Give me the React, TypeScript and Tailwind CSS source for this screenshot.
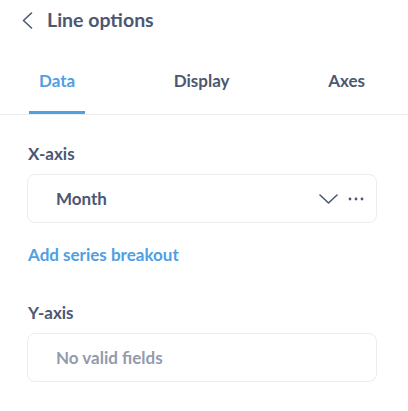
const font = { fontFamily: 'Lato, "Noto Sans", sans-serif' };

export default function App() {
    return (
        <div className="w-[408px] h-[411px] bg-white text-[#4c5773] overflow-hidden" style={font}>
            <div className="flex items-center h-[40px] pl-[22px] gap-[14px]">
                <svg width="11" height="17" viewBox="0 0 11 17" fill="none" stroke="currentColor" strokeWidth="1.6" strokeLinecap="round" strokeLinejoin="round">
                    <polyline points="9.5,1 1.5,8.5 9.5,16" />
                </svg>
                <span className="text-[19.5px] leading-[24px] font-bold">Line options</span>
            </div>

            <div className="flex justify-between pl-[29px] pr-[33px] pt-[31px] border-b border-[#eeecec]">
                {['Data', 'Display', 'Axes'].map((t, i) => (
                    <div
                        key={t}
                        className={`px-[10px] pb-[20px] text-[17px] leading-[20px] font-bold border-b-[3px] ${
                            i === 0 ? 'text-[#509ee3] border-[#509ee3]' : 'border-transparent'
                        }`}
                    >
                        {t}
                    </div>
                ))}
            </div>

            <div className="pl-[27px] pr-[31px] pt-[29px]">
                <div className="text-[17px] leading-[20px] font-bold pl-[1px] mb-[10px]">X-axis</div>
                <div className="h-[49px] border border-[#eeecec] rounded-[8px] flex items-center pl-[28px] pr-[12px]">
                    <span className="text-[17px] leading-[20px] font-bold flex-1">Month</span>
                    <svg width="19" height="10" viewBox="0 0 19 10" fill="none" stroke="currentColor" strokeWidth="1.6" strokeLinecap="round" strokeLinejoin="round">
                        <polyline points="1,1 9.5,9 18,1" />
                    </svg>
                    <svg width="16" height="4" viewBox="0 0 16 4" fill="currentColor" className="ml-[10px]">
                        <circle cx="2" cy="2" r="1.4" />
                        <circle cx="8" cy="2" r="1.4" />
                        <circle cx="14" cy="2" r="1.4" />
                    </svg>
                </div>
                <div className="text-[17px] leading-[20px] font-bold text-[#509ee3] pl-[1px] mt-[22px]">Add series breakout</div>

                <div className="text-[17px] leading-[20px] font-bold pl-[1px] mt-[38px] mb-[10px]">Y-axis</div>
                <div className="h-[49px] border border-[#eeecec] rounded-[8px] flex items-center pl-[28px]">
                    <span className="text-[17px] leading-[20px] font-bold text-[#949aab]">No valid fields</span>
                </div>
            </div>
        </div>
    );
}
